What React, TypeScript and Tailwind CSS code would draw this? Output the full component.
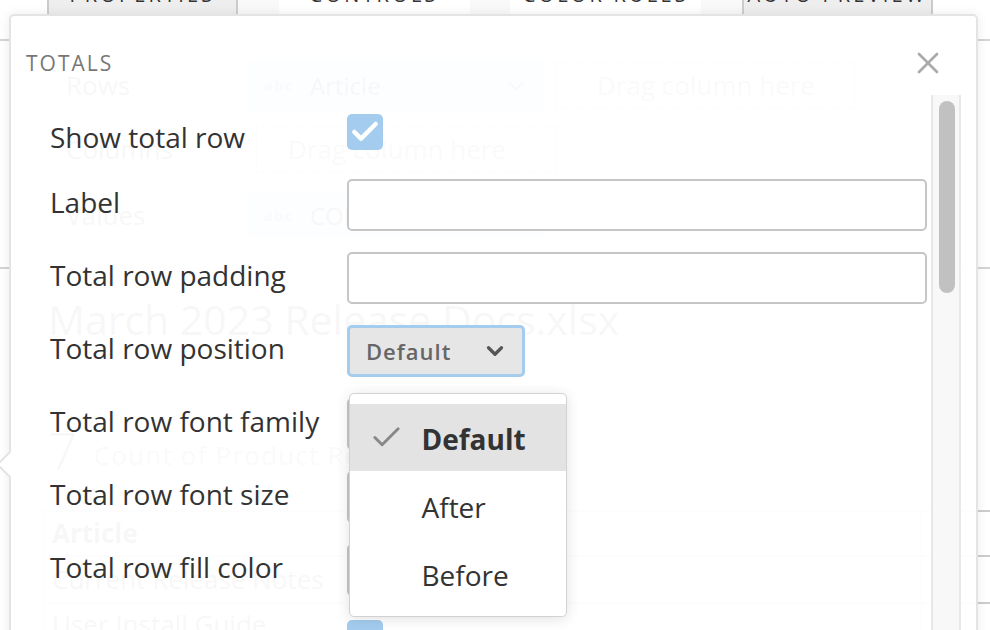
import { Check, ChevronDown, X } from 'lucide-react';

const tabs = [
  { name: 'PROPERTIES', active: true },
  { name: 'CONTROLS', active: false },
  { name: 'COLOR RULES', active: false },
  { name: 'AUTO PREVIEW', active: true },
];

const fieldRows = ['Label', 'Total row padding'];
const selectRows = ['Total row font family', 'Total row font size', 'Total row fill color'];

function AbcMark() {
  return <span className="w-[32px] text-[15px] font-bold tracking-[1px] text-[#789]">abc</span>;
}

function Background() {
  return (
    <div className="flex h-[630px] flex-col text-[#333]">
      {/* Tabs behind the popup */}
      <div className="ml-[47px] flex h-[14px] w-[886px] shrink-0 justify-between bg-[#f9f9f9]">
        {tabs.map((tab) => (
          <div
            key={tab.name}
            className={`flex w-[191px] shrink-0 items-end justify-center overflow-hidden border-x-2 pb-[8px] text-[20px] leading-[22px] tracking-[3.2px] ${
              tab.active ? 'border-[#ccc] bg-[#eee]' : 'border-transparent bg-white'
            }`}
          >
            {tab.name}
          </div>
        ))}
      </div>

      {/* Builder section */}
      <div className="mt-[25px] h-[230px] shrink-0 border-y-2 border-[#d4d4d4] pl-[66px] text-[26px]">
        <div className="mt-[18px] flex items-center">
          <span className="w-[182px]">Rows</span>
          <div className="flex h-[53px] w-[297px] items-center gap-[14px] bg-[#c4dcf2] px-[16px] text-[24px]">
            <AbcMark />
            <span className="flex-1">Article</span>
            <ChevronDown size={26} strokeWidth={2} className="text-[#567]" />
          </div>
          <div className="ml-[11px] flex h-[47px] w-[299px] items-center border border-dashed border-[#999] pl-[40px] text-[#777]">
            Drag column here
          </div>
        </div>
        <div className="mt-[14px] flex items-center">
          <span className="w-[190px]">Columns</span>
          <div className="flex h-[47px] w-[300px] items-center border border-dashed border-[#999] pl-[31px] text-[#777]">
            Drag column here
          </div>
        </div>
        <div className="mt-[20px] flex items-center">
          <span className="w-[182px]">Values</span>
          <div className="flex h-[45px] w-[297px] items-center gap-[14px] bg-[#c4dcf2] px-[16px] text-[24px]">
            <AbcMark />
            <span>COL</span>
          </div>
        </div>
      </div>

      {/* Report preview */}
      <div className="shrink-0 pl-[48px] pt-[24px] text-[41px] leading-[52px]">March 2023 Release Docs.xlsx</div>
      <div className="mt-[75px] flex h-[60px] shrink-0 items-center gap-[16px] pl-[48px]">
        <span className="text-[52px] font-light leading-[60px]">7</span>
        <span className="pt-[10px] text-[26px] tracking-[1.2px] text-[#777]">Count of Product Release</span>
      </div>
      <div className="ml-[43px] mt-[30px] shrink-0 border-t-2 border-[#ccc] text-[26px]">
        <div className="h-[45px] border-b-2 border-[#ccc]">
          <div className="flex h-full w-[878px] items-center border-x border-[#ccc] pl-[8px] font-bold">Article</div>
        </div>
        <div className="h-[47px] border-b-2 border-[#ccc]">
          <div className="flex h-full w-[878px] items-center border-x border-[#ccc] pl-[8px]">Current Release Notes</div>
        </div>
        <div className="h-[40px]">
          <div className="flex h-full w-[878px] items-center border-x border-[#ccc] pl-[8px]">User Install Guide</div>
        </div>
      </div>
    </div>
  );
}

function DropdownMenu() {
  return (
    <div className="absolute left-[338px] top-[298px] z-10 w-[218px] rounded-[5px] border-[1.5px] border-[#d2d2d2] bg-white py-[9.5px] text-[28px] text-[#333] shadow-[0_2px_14px_rgba(0,0,0,0.12)]">
      <div className="flex h-[67px] items-center bg-[#e3e3e3] pl-[18.5px]">
        <span className="w-[53px] shrink-0">
          <Check size={35} strokeWidth={2} className="text-[#888]" />
        </span>
        <span className="pt-[4px] font-bold">Default</span>
      </div>
      <div className="flex h-[68px] items-center pl-[71.5px] pt-[4px]">After</div>
      <div className="flex h-[68px] items-center pl-[71.5px] pt-[4px]">Before</div>
    </div>
  );
}

function TotalsPopup() {
  return (
    <div className="absolute left-[9px] top-[14px] flex h-[640px] w-[969px] flex-col rounded-[5px] border-2 border-[#e4e4e4] bg-white/96 shadow-[0_0_12px_rgba(0,0,0,0.08)]">
      {/* Arrow on the left edge */}
      <div className="absolute left-[-11px] top-[439px] h-[19px] w-[19px] rotate-45 border-b-2 border-l-2 border-[#e4e4e4] bg-white" />

      <div className="relative flex h-[79px] shrink-0 items-start justify-between pl-[15px] pr-[30px]">
        <span className="mt-[32px] text-[21px] leading-[30px] tracking-[2px] text-[#777]">TOTALS</span>
        <X size={36} strokeWidth={1.8} className="mt-[29px] text-[#aaa]" />
      </div>

      <div className="relative flex min-h-0 flex-1">
        <div className="flex-1 overflow-hidden pl-[39px] pr-[4px] pt-[19px] text-[28px] leading-[36px] text-[#333]">
          {/* Show total row */}
          <div className="flex h-[36px]">
            <span className="mt-[5px] w-[297px]">Show total row</span>
            <div className="flex h-[36px] w-[36px] items-center justify-center rounded-[5px] bg-[#a3ccee]">
              <Check size={32} strokeWidth={3.4} className="shrink-0 text-white" />
            </div>
          </div>

          {fieldRows.map((label, i) => (
            <div key={label} className={`flex items-center ${i === 0 ? 'mt-[29px]' : 'mt-[21px]'}`}>
              <span className="mb-[6px] w-[297px]">{label}</span>
              <div className="h-[52px] flex-1 rounded-[5px] border-2 border-[#c6c6c6] bg-white" />
            </div>
          ))}

          {/* Total row position */}
          <div className="mt-[21px] flex items-center">
            <span className="mb-[6px] w-[297px]">Total row position</span>
            <div className="flex h-[52px] w-[178px] items-center justify-between rounded-[5px] border-[3px] border-[#a3ccee] bg-[#e6e6e6] pl-[16px] pr-[14px] text-[22px] font-semibold tracking-[1px] text-[#666]">
              <span>Default</span>
              <ChevronDown size={26} strokeWidth={3} className="text-[#555]" />
            </div>
          </div>

          {selectRows.map((label) => (
            <div key={label} className="mt-[21px] flex items-center">
              <span className="mb-[6px] w-[297px]">{label}</span>
              <div className="h-[52px] w-[178px] rounded-[5px] border-2 border-[#c6c6c6] bg-[#e6e6e6]" />
            </div>
          ))}

          <div className="mt-[24px] h-[36px] w-[36px] translate-x-[297px] rounded-[5px] bg-[#a3ccee]" />
        </div>

        {/* Scrollbar */}
        <div className="mr-[15px] w-[30px] shrink-0 border-x-2 border-[#e8e8e8] bg-[#f8f8f8] pl-[6px] pr-[4px] pt-[6px]">
          <div className="h-[192px] rounded-full bg-[#c1c1c1]" />
        </div>

        <DropdownMenu />
      </div>
    </div>
  );
}

export default function App() {
  return (
    <div className="relative h-[630px] w-[990px] overflow-hidden bg-white font-['Open_Sans',sans-serif]">
      <Background />
      <TotalsPopup />
    </div>
  );
}
